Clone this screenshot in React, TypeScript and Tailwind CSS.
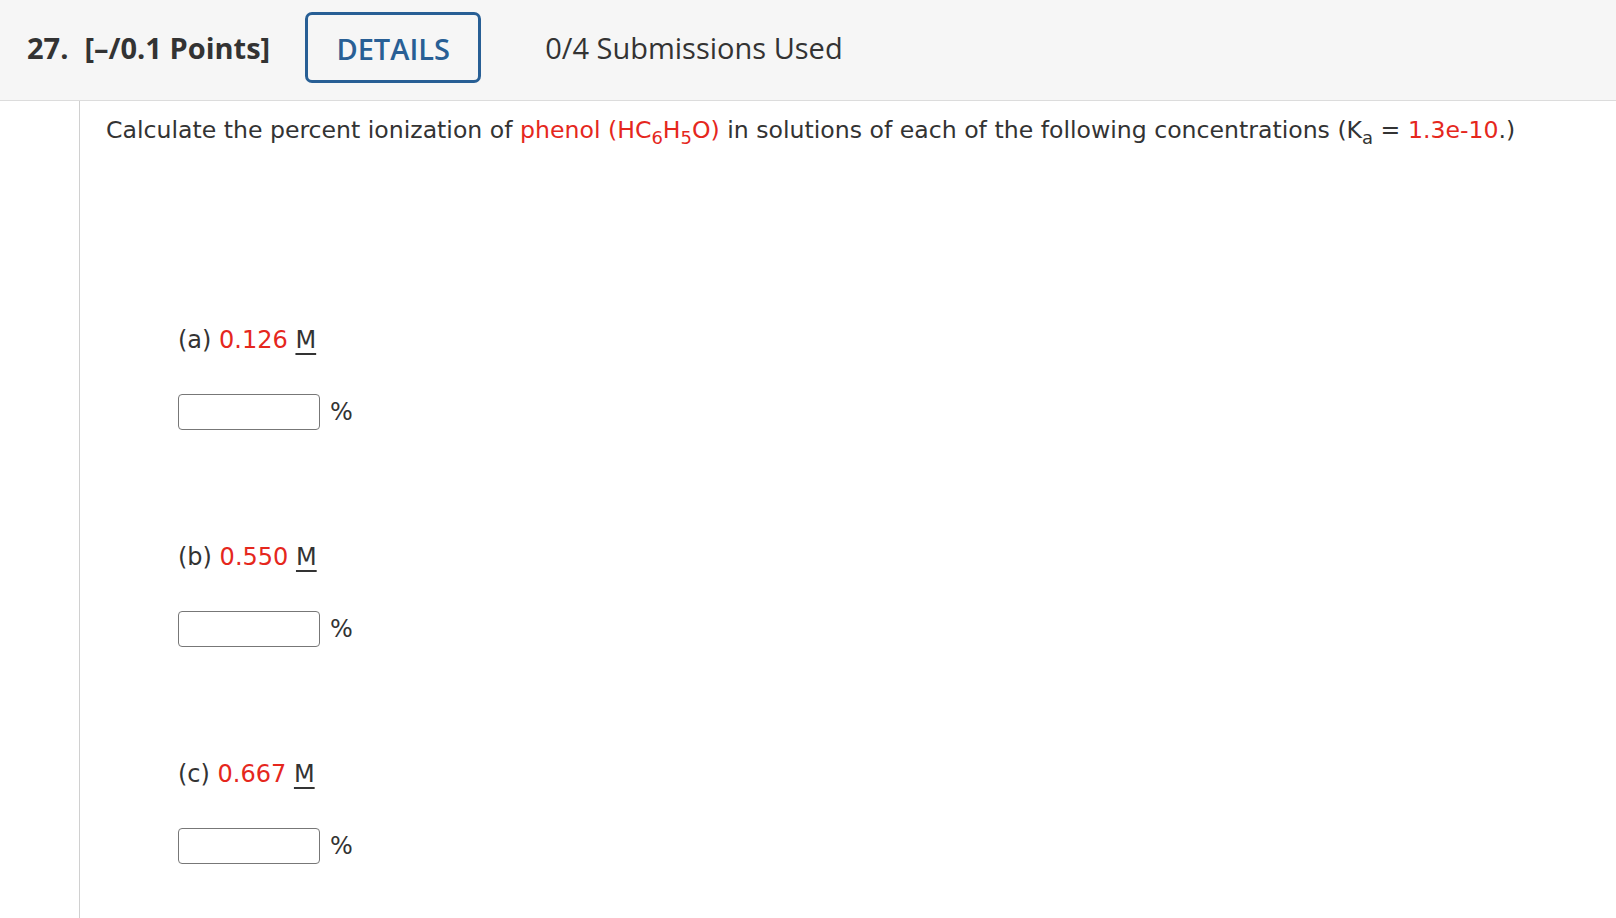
const parts = [
  { label: '(a)', value: '0.126' },
  { label: '(b)', value: '0.550' },
  { label: '(c)', value: '0.667' },
]

export default function App() {
  return (
    <div className="w-[1616px] h-[918px] bg-white overflow-hidden text-[#333]">
      {/* Question header */}
      <div className="h-[101px] bg-[#f6f6f6] border-b border-[#dcdcdc] flex items-start pt-[12px] pl-[27px] font-['Open_Sans',sans-serif]">
        <div className="h-[70px] flex items-center pt-[2px]">
          <span className="text-[29px] font-bold text-[#333]">27.</span>
          <span className="ml-[16px] text-[29px] font-bold text-[#333]">[–/0.1 Points]</span>
          <div className="ml-[35px] w-[176px] h-[71px] -mt-[1px] border-[3px] border-[#285f95] rounded-[7px] flex items-center justify-center text-[29px] font-semibold text-[#285f95]">
            <span className="pt-[2px]">DETAILS</span>
          </div>
          <span className="ml-[64px] text-[29px] text-[#333]">0/4 Submissions Used</span>
        </div>
      </div>

      {/* Question body */}
      <div className="flex h-[817px]">
        <div className="w-[80px] shrink-0 border-r border-[#d0d0d0]" />
        <div className="pl-[26px] pt-[13px] font-['DejaVu_Sans',Verdana,sans-serif] text-[24px]">
          <p className="leading-[32px] text-[23.6px]">
            Calculate the percent ionization of{' '}
            <span className="text-[#e5271d]">
              phenol (HC<sub className="text-[18px] -bottom-[6px]">6</sub>H<sub className="text-[18px] -bottom-[6px]">5</sub>O)
            </span>{' '}
            in solutions of each of the following concentrations (K<sub className="text-[18px] -bottom-[6px]">a</sub> ={' '}
            <span className="text-[#e5271d]">1.3e-10</span>.)
          </p>

          <div className="pl-[72px] pt-[177px] flex flex-col gap-[110px]">
            {parts.map((p) => (
              <div key={p.label} className="flex flex-col gap-[38px]">
                <p className="leading-[32px] pt-[1px]">
                  {p.label} <span className="text-[#e5271d]">{p.value}</span>{' '}
                  <span className="underline underline-offset-[5px]">M</span>
                </p>
                <div className="flex items-center gap-[10px]">
                  <div className="w-[142px] h-[36px] border border-[#777] rounded-[4px] bg-white" />
                  <span>%</span>
                </div>
              </div>
            ))}
          </div>
        </div>
      </div>
    </div>
  )
}
